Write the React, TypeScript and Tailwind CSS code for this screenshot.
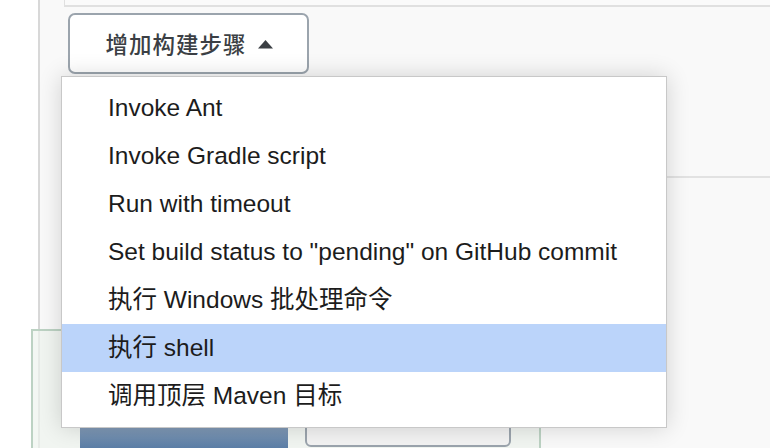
import React from 'react';

const FONT = { fontFamily: '"Liberation Sans", "Noto Sans CJK SC", sans-serif' };

const steps = [
  'Invoke Ant',
  'Invoke Gradle script',
  'Run with timeout',
  'Set build status to "pending" on GitHub commit',
  '执行 Windows 批处理命令',
  '执行 shell',
  '调用顶层 Maven 目标',
];

const App: React.FC = () => {
  const active = '执行 shell';

  return (
    <div className="flex h-[448px] w-[770px] overflow-hidden bg-white" style={FONT}>
      {/* left gutter */}
      <div className="w-[38px] shrink-0 bg-white" />

      <div className="relative flex-1 border-l-2 border-[#d8d8d8] bg-[#f9f9f9]">
        {/* previous step panel, bottom edge only */}
        <div className="ml-[24px] h-[7px] border-b-2 border-l border-[#e0e0e0] bg-[#fafafa]" />

        {/* add build step button */}
        <button className="ml-[28px] mt-[6px] flex h-[61px] w-[241px] items-center justify-center gap-[10px] rounded-[7px] border-2 border-[#9ba4ad] bg-white pl-[2px] text-[22.5px] font-medium text-[#3b3f44]" style={{ fontFamily: '"Noto Sans CJK SC", sans-serif' }}>
          <span className="tracking-[1px]">增加构建步骤</span>
          <svg width="17" height="10" viewBox="0 0 17 10">
            <polygon points="8.5,1 16,9.5 1,9.5" fill="#3b3f44" />
          </svg>
        </button>

        {/* post-build section */}
        <div className="ml-[24px] h-[104px] border-b-2 border-[#e2e2e2]" />

        {/* next section */}
        <div className="mt-[151px] -ml-[9px] h-[130px] w-[510px] border-2 border-b-0 border-[#bcd2c3] bg-[rgba(238,243,238,0.7)] pl-[47px] pt-[68px]">
          <div className="flex gap-[17px]">
            <div className="h-[60px] w-[208px] rounded-[4px] bg-gradient-to-b from-[#b9c7d8] via-[#7f98b5] to-[#46709f]" />
            <div className="h-[48px] w-[206px] rounded-[6px] border-2 border-[#9ba4ad] bg-[#f3f3f3]" />
          </div>
        </div>

        {/* dropdown menu */}
        <ul className="absolute left-[21px] top-[76px] w-[606px] border-[1.5px] border-[#c8c8c8] bg-white py-[7px] shadow-[0_0_22px_rgba(0,0,0,0.16)]">
          {steps.map((s) => (
            <li
              key={s}
              className={`flex h-[48px] items-center pl-[46px] text-[24.5px] text-[#1c1c1c] ${s === active ? 'bg-[#bbd4fa]' : ''}`}
            >
              {s}
            </li>
          ))}
        </ul>
      </div>
    </div>
  );
};

export default App;
